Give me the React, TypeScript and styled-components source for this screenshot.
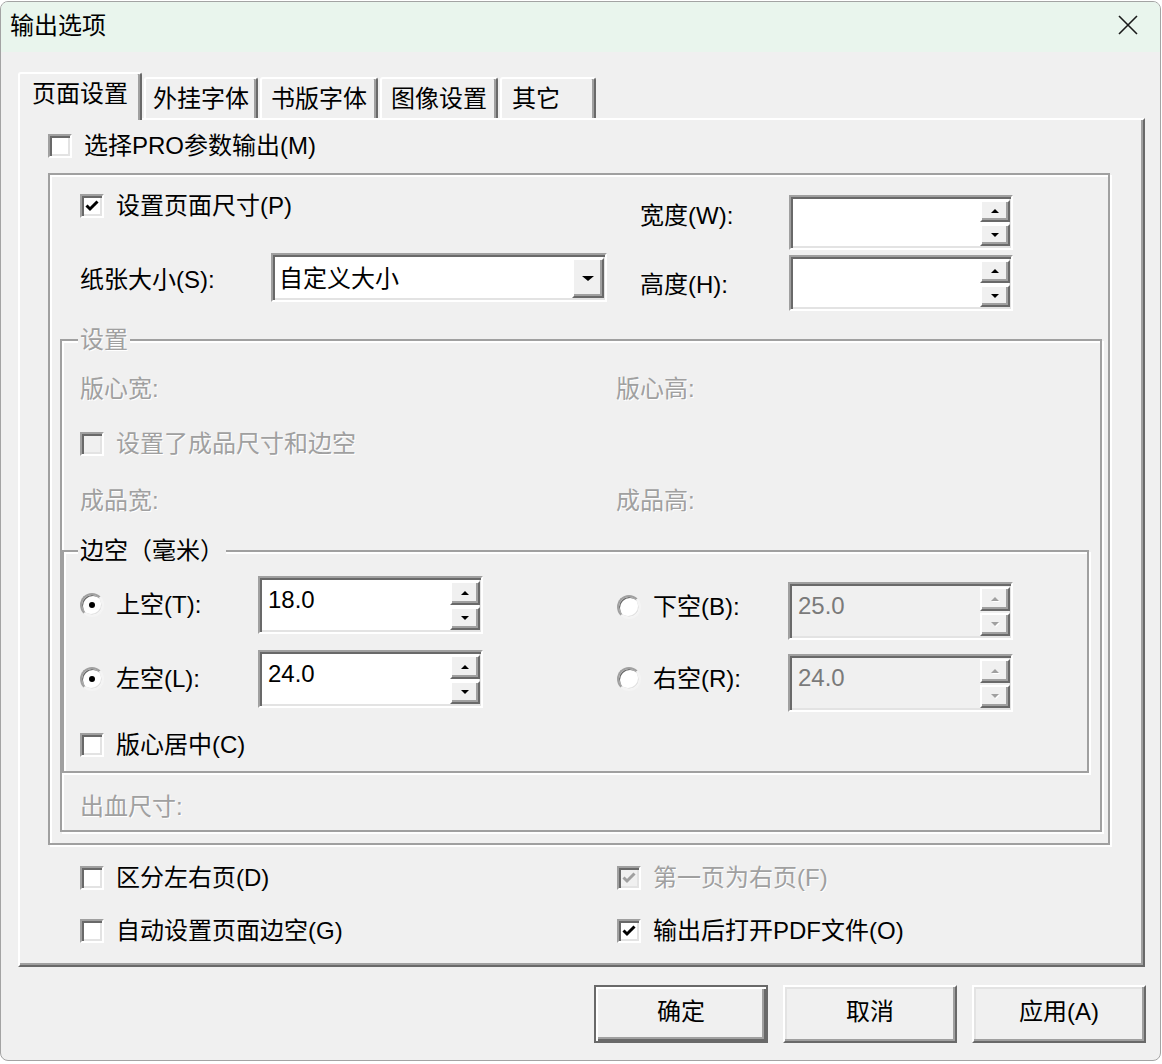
import React from "react";
import styled, { createGlobalStyle, css } from "styled-components";

const FONT = `"Liberation Sans", "Noto Sans CJK SC", sans-serif`;

const GlobalStyle = createGlobalStyle`
  html, body { margin: 0; padding: 0; background: #ffffff; }
  body { font-family: ${FONT}; }
  * { box-sizing: border-box; }
`;

const sunken = css`
  border-style: solid;
  border-width: 2px;
  border-color: #a0a0a0 #ffffff #ffffff #a0a0a0;
  box-shadow: inset 2px 2px 0 #696969, inset -2px -2px 0 #e3e3e3;
`;

const raised = css`
  background: #f0f0f0;
  border-style: solid;
  border-width: 2px;
  border-color: #ffffff #696969 #696969 #ffffff;
  box-shadow: inset -2px -2px 0 #a0a0a0;
`;

const etched = css`
  border: 2px solid #a0a0a0;
  box-shadow: inset 2px 2px 0 #ffffff, 2px 2px 0 #ffffff;
`;

const Window = styled.div`
  width: 1161px;
  height: 1060px;
  margin-top: 1px;
  border: 1px solid #a3a3a3;
  border-radius: 8px;
  overflow: hidden;
  background: #f0f0f0;
  display: flex;
  flex-direction: column;
  font-family: ${FONT};
  font-size: 24px;
  color: #000000;
`;

const TitleBar = styled.div`
  height: 50px;
  flex: none;
  background: #e9f5ed;
  display: flex;
  align-items: center;
  justify-content: space-between;
  padding-left: 9px;
`;

const TitleText = styled.span`
  font-size: 24px;
  line-height: 30px;
  color: #000;
  margin-top: -2px;
`;

const CloseButton = styled.div`
  width: 20px;
  height: 20px;
  margin-right: 22px;
  margin-top: -4px;
  display: flex;
`;

const Body = styled.div`
  flex: 1;
  padding: 20px 15px 0 17px;
  display: flex;
  flex-direction: column;
`;

const TabStrip = styled.div`
  display: flex;
  align-items: flex-end;
  gap: 2px;
  height: 48px;
  margin-bottom: -2px;
  position: relative;
  z-index: 1;
`;

const Tab = styled.div<{ $active?: boolean; $w: number; $pl?: number }>`
  width: ${(p) => p.$w}px;
  height: ${(p) => (p.$active ? 48 : 41)}px;
  margin-bottom: ${(p) => (p.$active ? 0 : 2)}px;
  display: flex;
  align-items: center;
  justify-content: ${(p) => (p.$pl != null ? "flex-start" : "center")};
  padding-left: ${(p) => p.$pl ?? 0}px;
  padding-bottom: ${(p) => (p.$active ? 6 : 0)}px;
  background: #f0f0f0;
  border-top: 2px solid #ffffff;
  border-left: 2px solid #ffffff;
  border-right: 2px solid #696969;
  border-top-left-radius: 3px;
  border-top-right-radius: 3px;
  box-shadow: inset -2px 0 0 #a0a0a0;
  line-height: 28px;
  white-space: nowrap;
`;

const Panel = styled.div`
  height: 849px;
  flex: none;
  border-top: 2px solid #ffffff;
  border-left: 2px solid #ffffff;
  border-right: 2px solid #696969;
  border-bottom: 2px solid #696969;
  box-shadow: inset -2px -2px 0 #a0a0a0;
  padding: 12px 33px 0 28px;
  display: flex;
  flex-direction: column;
  align-items: stretch;
`;

const Item = styled.div<{ $disabled?: boolean }>`
  display: flex;
  align-items: center;
  gap: 12px;
  height: 28px;
  line-height: 28px;
  white-space: nowrap;
  color: ${(p) => (p.$disabled ? "#a0a0a0" : "#000")};
  text-shadow: ${(p) => (p.$disabled ? "1px 1px 0 #ffffff" : "none")};
`;

const Label = styled.span<{ $disabled?: boolean }>`
  line-height: 28px;
  white-space: nowrap;
  color: ${(p) => (p.$disabled ? "#a0a0a0" : "#000")};
  text-shadow: ${(p) => (p.$disabled ? "1px 1px 0 #ffffff" : "none")};
`;

const Box = styled.span<{ $disabled?: boolean }>`
  width: 24px;
  height: 24px;
  flex: none;
  background: ${(p) => (p.$disabled ? "#f0f0f0" : "#ffffff")};
  ${sunken};
  display: flex;
  align-items: center;
  justify-content: center;
`;

const RadioCircle = styled.span<{ $checked?: boolean }>`
  width: 24px;
  height: 24px;
  flex: none;
  border-radius: 50%;
  background: #ffffff;
  border: 2px solid;
  border-color: #a0a0a0 #f4f4f4 #f4f4f4 #a0a0a0;
  box-shadow: inset 1px 1px 0 #696969, inset -1px -1px 0 #e3e3e3;
  display: flex;
  align-items: center;
  justify-content: center;
  &::after {
    content: "";
    width: 6px;
    height: 6px;
    border-radius: 50%;
    background: #000;
    display: ${(p) => (p.$checked ? "block" : "none")};
  }
`;

const OuterGroup = styled.div`
  ${etched};
  margin-top: 13px;
  padding: 20px 0 11px 0;
  display: flex;
  flex-direction: column;
`;

const SizeGrid = styled.div`
  display: grid;
  grid-template-columns: 191px 336px 33px 149px 224px;
  grid-template-rows: 56px 58px;
  row-gap: 2px;
  align-items: start;
  margin-left: 30px;
`;

const Cell = styled.div<{ $col: string; $top?: number }>`
  grid-column: ${(p) => p.$col};
  margin-top: ${(p) => p.$top ?? 0}px;
  display: flex;
`;

const Fieldset = styled.fieldset<{ $m: string; $pb: number }>`
  ${etched};
  margin: ${(p) => p.$m};
  padding: 0 0 ${(p) => p.$pb}px 0;
  min-width: 0;
  display: flex;
  flex-direction: column;
`;

const Legend = styled.legend<{ $disabled?: boolean; $indent: number }>`
  margin-left: ${(p) => p.$indent}px;
  padding: 0 2px;
  line-height: 28px;
  background: #f0f0f0;
  color: ${(p) => (p.$disabled ? "#a0a0a0" : "#000")};
  text-shadow: ${(p) => (p.$disabled ? "1px 1px 0 #ffffff" : "none")};
`;

const InfoRow = styled.div<{ $top: number; $pl?: number }>`
  display: grid;
  grid-template-columns: 536px auto;
  margin-top: ${(p) => p.$top}px;
  padding-left: ${(p) => p.$pl ?? 18}px;
  height: 28px;
`;

const MarginColumns = styled.div`
  display: flex;
  align-items: flex-start;
  padding-left: 16px;
`;

const MarginCol = styled.div<{ $w?: number; $pt: number; $gap: number; $labelW: number; $lift?: number }>`
  width: ${(p) => (p.$w ? `${p.$w}px` : "auto")};
  padding-top: ${(p) => p.$pt}px;
  display: grid;
  grid-template-columns: ${(p) => p.$labelW}px 225px;
  grid-auto-rows: 58px;
  row-gap: ${(p) => p.$gap}px;
  align-items: center;
  & > ${Item} {
    margin-bottom: ${(p) => (p.$lift ?? 0) * 2}px;
  }
`;

const SpinField = styled.div<{ $w: number; $h: number; $disabled?: boolean }>`
  width: ${(p) => p.$w}px;
  height: ${(p) => p.$h}px;
  display: flex;
  background: ${(p) => (p.$disabled ? "#f0f0f0" : "#ffffff")};
  ${sunken};
  padding: 3px 1px 2px 0;
`;

const SpinText = styled.div<{ $disabled?: boolean }>`
  flex: 1;
  padding: 5px 0 0 8px;
  line-height: 28px;
  color: ${(p) => (p.$disabled ? "#7a7a7a" : "#000")};
`;

const SpinButtons = styled.div`
  width: 30px;
  display: flex;
  flex-direction: column;
  gap: 2px;
`;

const SpinButton = styled.div`
  flex: 1;
  ${raised};
  display: flex;
  align-items: center;
  justify-content: center;
`;

const Arrow = styled.span<{ $dir: "up" | "down"; $size: number; $disabled?: boolean }>`
  width: 0;
  height: 0;
  border-left: ${(p) => p.$size}px solid transparent;
  border-right: ${(p) => p.$size}px solid transparent;
  ${(p) =>
    p.$dir === "up"
      ? `border-bottom: ${Math.round(p.$size * 0.9)}px solid ${p.$disabled ? "#a0a0a0" : "#000"};`
      : `border-top: ${Math.round(p.$size * 0.9)}px solid ${p.$disabled ? "#a0a0a0" : "#000"};`}
  filter: ${(p) => (p.$disabled ? "drop-shadow(1px 1px 0 #ffffff)" : "none")};
`;

const ComboField = styled.div`
  width: 336px;
  height: 49px;
  display: flex;
  align-items: center;
  background: #ffffff;
  ${sunken};
  padding: 3px 1px 2px 0;
`;

const ComboText = styled.div`
  flex: 1;
  padding: 2px 0 0 6px;
  line-height: 28px;
`;

const DropButton = styled.div`
  width: 32px;
  height: 40px;
  ${raised};
  display: flex;
  align-items: center;
  justify-content: center;
`;

const BottomGrid = styled.div`
  display: grid;
  grid-template-columns: 537px auto;
  row-gap: 25px;
  margin-top: 19px;
  padding-left: 32px;
`;

const ButtonRow = styled.div`
  display: flex;
  justify-content: flex-end;
  gap: 15px;
  margin-top: 18px;
  margin-right: -1px;
`;

const Button = styled.button<{ $default?: boolean }>`
  width: 174px;
  height: 58px;
  font-family: ${FONT};
  font-size: 24px;
  line-height: 28px;
  color: #000;
  background: #f0f0f0;
  padding: 0 0 4px 0;
  border-style: solid;
  border-width: 2px;
  ${(p) =>
    p.$default
      ? `border-color: #696969;
         box-shadow: inset 2px 2px 0 #ffffff, inset -2px -2px 0 #696969, inset -4px -4px 0 #a0a0a0;`
      : `border-color: #ffffff #696969 #696969 #ffffff;
         box-shadow: inset -2px -2px 0 #a0a0a0, inset 2px 2px 0 #e3e3e3;`}
`;

function CheckMark({ color }: { color: string }) {
  return (
    <svg width="14" height="12" viewBox="0 0 14 12">
      <polyline points="1.5,5.5 5,9 12.5,1.5" fill="none" stroke={color} strokeWidth="3" />
    </svg>
  );
}

function Check({ label, checked, disabled }: { label: string; checked?: boolean; disabled?: boolean }) {
  return (
    <Item $disabled={disabled}>
      <Box $disabled={disabled}>{checked && <CheckMark color={disabled ? "#a0a0a0" : "#000"} />}</Box>
      <span>{label}</span>
    </Item>
  );
}

function Radio({ label, checked }: { label: string; checked?: boolean }) {
  return (
    <Item>
      <RadioCircle $checked={checked} />
      <span>{label}</span>
    </Item>
  );
}

function SpinBox({ w, h, value, disabled }: { w: number; h: number; value?: string; disabled?: boolean }) {
  return (
    <SpinField $w={w} $h={h} $disabled={disabled}>
      <SpinText $disabled={disabled}>{value}</SpinText>
      <SpinButtons>
        <SpinButton>
          <Arrow $dir="up" $size={4} $disabled={disabled} />
        </SpinButton>
        <SpinButton>
          <Arrow $dir="down" $size={4} $disabled={disabled} />
        </SpinButton>
      </SpinButtons>
    </SpinField>
  );
}

const tabs = [
  { label: "页面设置", w: 124, active: true },
  { label: "外挂字体", w: 114 },
  { label: "书版字体", w: 118 },
  { label: "图像设置", w: 118 },
  { label: "其它", w: 96, pl: 10 },
];

export default function App() {
  return (
    <>
      <GlobalStyle />
      <Window>
        <TitleBar>
          <TitleText>输出选项</TitleText>
          <CloseButton>
            <svg width="20" height="20" viewBox="0 0 20 20">
              <path d="M1 1 L19 19 M19 1 L1 19" stroke="#1a1a1a" strokeWidth="1.6" fill="none" />
            </svg>
          </CloseButton>
        </TitleBar>
        <Body>
          <TabStrip>
            {tabs.map((t) => (
              <Tab key={t.label} $active={t.active} $w={t.w} $pl={t.pl}>
                {t.label}
              </Tab>
            ))}
          </TabStrip>
          <Panel>
            <Check label="选择PRO参数输出(M)" />
            <OuterGroup>
              <SizeGrid>
                <Cell $col="1 / 3" $top={-3}>
                  <Check label="设置页面尺寸(P)" checked />
                </Cell>
                <Cell $col="4" $top={7}>
                  <Label>宽度(W):</Label>
                </Cell>
                <Cell $col="5">
                  <SpinBox w={224} h={55} />
                </Cell>
                <Cell $col="1" $top={13}>
                  <Label>纸张大小(S):</Label>
                </Cell>
                <Cell $col="2">
                  <ComboField>
                    <ComboText>自定义大小</ComboText>
                    <DropButton>
                      <Arrow $dir="down" $size={6} />
                    </DropButton>
                  </ComboField>
                </Cell>
                <Cell $col="4" $top={18}>
                  <Label>高度(H):</Label>
                </Cell>
                <Cell $col="5" $top={2}>
                  <SpinBox w={224} h={56} />
                </Cell>
              </SizeGrid>

              <Fieldset $m="15px 6px 0 10px" $pb={9}>
                <Legend $disabled $indent={16}>
                  设置
                </Legend>
                <InfoRow $top={21}>
                  <Label $disabled>版心宽:</Label>
                  <Label $disabled>版心高:</Label>
                </InfoRow>
                <InfoRow $top={27}>
                  <Check label="设置了成品尺寸和边空" disabled />
                </InfoRow>
                <InfoRow $top={29}>
                  <Label $disabled>成品宽:</Label>
                  <Label $disabled>成品高:</Label>
                </InfoRow>

                <Fieldset $m="22px 11px 0 0" $pb={12}>
                  <Legend $indent={14}>边空（毫米）</Legend>
                  <MarginColumns>
                    <MarginCol $w={537} $pt={11} $gap={16} $labelW={178}>
                      <Radio label="上空(T):" checked />
                      <SpinBox w={225} h={58} value="18.0" />
                      <Radio label="左空(L):" checked />
                      <SpinBox w={225} h={58} value="24.0" />
                    </MarginCol>
                    <MarginCol $pt={17} $gap={14} $labelW={171} $lift={4}>
                      <Radio label="下空(B):" />
                      <SpinBox w={225} h={58} value="25.0" disabled />
                      <Radio label="右空(R):" />
                      <SpinBox w={225} h={58} value="24.0" disabled />
                    </MarginCol>
                  </MarginColumns>
                  <InfoRow $top={19} $pl={16}>
                    <Check label="版心居中(C)" />
                  </InfoRow>
                </Fieldset>

                <InfoRow $top={20}>
                  <Label $disabled>出血尺寸:</Label>
                </InfoRow>
              </Fieldset>
            </OuterGroup>

            <BottomGrid>
              <Check label="区分左右页(D)" />
              <Check label="第一页为右页(F)" checked disabled />
              <Check label="自动设置页面边空(G)" />
              <Check label="输出后打开PDF文件(O)" checked />
            </BottomGrid>
          </Panel>
          <ButtonRow>
            <Button $default>确定</Button>
            <Button>取消</Button>
            <Button>应用(A)</Button>
          </ButtonRow>
        </Body>
      </Window>
    </>
  );
}
